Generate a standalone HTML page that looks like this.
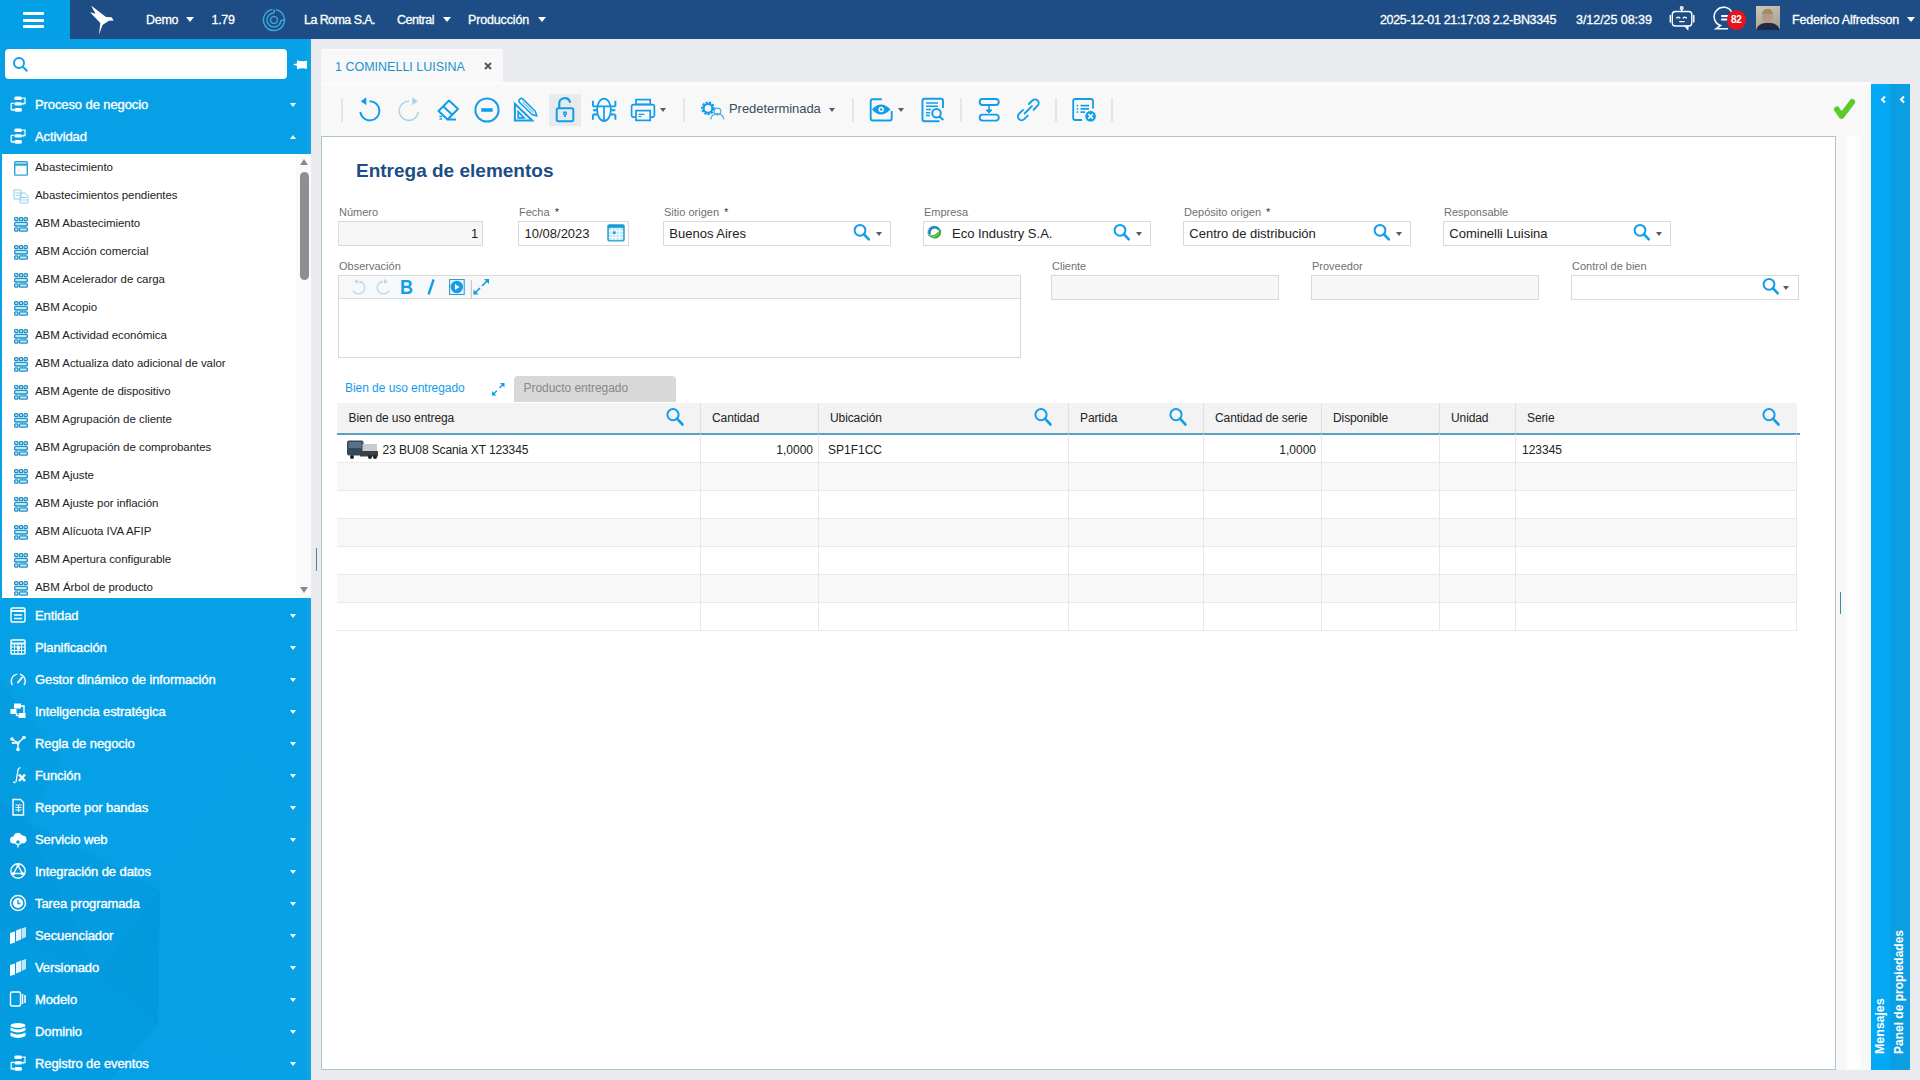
<!DOCTYPE html><html><head><meta charset="utf-8"><style>
*{box-sizing:border-box;margin:0;padding:0}
html,body{width:1920px;height:1080px;overflow:hidden;background:#e9ebef;font-family:"Liberation Sans",sans-serif;color:#222}
.a{position:absolute}
.t{position:absolute;white-space:nowrap}
svg{position:absolute;overflow:visible}
.caret{position:absolute;width:0;height:0;border-left:4px solid transparent;border-right:4px solid transparent;border-top:5px solid #fff}
.dcaret{position:absolute;width:0;height:0;border-left:3.5px solid transparent;border-right:3.5px solid transparent;border-top:4px solid #555c63}
</style></head><body>
<div class="a" style="left:0;top:0;width:1920px;height:39px;background:#1d4d84"></div>
<div class="a" style="left:0;top:0;width:70px;height:39px;background:#03a0e6"></div>
<div class="a" style="left:23px;top:12px;width:21px;height:3px;border-radius:1px;background:#fff"></div>
<div class="a" style="left:23px;top:18.5px;width:21px;height:3px;border-radius:1px;background:#fff"></div>
<div class="a" style="left:23px;top:25px;width:21px;height:3px;border-radius:1px;background:#fff"></div>
<svg style="left:80px;top:0" width="40" height="40" viewBox="0 0 40 40"><path d="M11 5.5 L26 17 L31.5 17.3 L33.8 20.6 L29 20.8 L22.5 25 L19 34.8 L20.3 23 L10 12.2 L15.5 13.7 Z" fill="#fff"/></svg>
<div class="t" style="left:146px;top:11.97px;font-size:12.5px;line-height:16px;color:#fff;-webkit-text-stroke:0.3px #fff;letter-spacing:-0.3px">Demo</div>
<div class="caret" style="left:186px;top:17px"></div>
<div class="t" style="left:211.5px;top:11.97px;font-size:12.5px;line-height:16px;color:#fff;-webkit-text-stroke:0.3px #fff;letter-spacing:-0.3px">1.79</div>
<svg style="left:262px;top:8px" width="24" height="24" viewBox="0 0 24 24" fill="none" stroke="#3aa4dd" stroke-width="1.5"><path d="M14 1.7A10.5 10.5 0 1 1 10.5 1.6"/><path d="M19 12A7 7 0 1 1 12 5"/><circle cx="12" cy="12" r="3.5"/><path d="M12.3 1.5v3.6M19 12.3h3.5"/></svg>
<div class="t" style="left:304px;top:11.97px;font-size:12.5px;line-height:16px;color:#fff;-webkit-text-stroke:0.3px #fff;letter-spacing:-0.57px">La Roma S.A.</div>
<div class="t" style="left:397px;top:11.97px;font-size:12.5px;line-height:16px;color:#fff;-webkit-text-stroke:0.3px #fff;letter-spacing:-0.47px">Central</div>
<div class="caret" style="left:443px;top:17px"></div>
<div class="t" style="left:468px;top:11.97px;font-size:12.5px;line-height:16px;color:#fff;-webkit-text-stroke:0.3px #fff;letter-spacing:-0.15px">Producción</div>
<div class="caret" style="left:538px;top:17px"></div>
<div class="t" style="left:1380px;top:12.27px;font-size:12.5px;line-height:16px;color:#fff;-webkit-text-stroke:0.3px #fff;letter-spacing:-0.34px">2025-12-01 21:17:03 2.2-BN3345</div>
<div class="t" style="left:1576px;top:12.27px;font-size:12.5px;line-height:16px;color:#fff;-webkit-text-stroke:0.3px #fff;letter-spacing:-0.05px">3/12/25 08:39</div>
<svg style="left:1660px;top:0" width="40" height="40" viewBox="0 0 40 40" fill="none" stroke="#fff" stroke-width="1.4" stroke-linecap="round"><rect x="12.3" y="11.5" width="19.5" height="14.5" rx="3"/><path d="M21.7 11.5V9.3"/><circle cx="21.7" cy="8" r="1.3"/><path d="M10.3 15.5v6.5M33.8 15.5v6.5"/><path d="M16.8 18q1.5-1.8 3 0M23.3 18q1.5-1.8 3 0M19.7 21.6h4.5"/><path d="M25 26l2.7 3l0.3-3"/></svg>
<svg style="left:1660px;top:0" width="80" height="40" viewBox="0 0 80 40" fill="none" stroke="#fff" stroke-width="1.5" stroke-linecap="round"><path d="M72 12.5A9.4 9.4 0 1 0 60.5 25.5L56 28.8h11.5"/><path d="M62 15.9h6M62 19.6h6" stroke-width="2"/></svg>
<div class="a" style="left:1726.5px;top:10px;width:19.5px;height:19.5px;border-radius:50%;background:#e8141c"></div>
<div class="t" style="left:1726.5px;top:12.5px;width:19.5px;text-align:center;font-size:10px;line-height:14px;font-weight:700;color:#fff;letter-spacing:-0.3px">82</div>
<div class="a" style="left:1756px;top:6px;width:24px;height:24px;background:linear-gradient(160deg,#cfc8b4,#9d9a90);overflow:hidden"><div class="a" style="left:6px;top:4px;width:11px;height:13px;border-radius:50%;background:#b89a82"></div><div class="a" style="left:6px;top:3px;width:11px;height:5px;border-radius:5px 5px 0 0;background:#a08a6a"></div><div class="a" style="left:0px;top:17px;width:24px;height:10px;border-radius:9px 9px 0 0;background:#1f2a44"></div></div>
<div class="t" style="left:1792px;top:11.97px;font-size:12.5px;line-height:16px;color:#fff;-webkit-text-stroke:0.3px #fff;letter-spacing:-0.18px">Federico Alfredsson</div>
<div class="caret" style="left:1907px;top:17px"></div>
<div class="a" style="left:0;top:39px;width:311px;height:1041px;background:#05a0e6;overflow:hidden"></div>
<svg style="left:0;top:0" width="311" height="1080" viewBox="0 0 311 1080"><path d="M0 800L28 822L97 974L0 930Z" fill="#003a6e" opacity="0.06"/><path d="M28 822L160 890L97 974Z" fill="#003a6e" opacity="0.04"/><path d="M97 974L160 890L158 1025Z" fill="#003a6e" opacity="0.07"/><path d="M0 930L97 974L158 1025L110 1080L0 1080Z" fill="#003a6e" opacity="0.045"/><path d="M160 890L250 760L311 820L311 1080L158 1025Z" fill="#ffffff" opacity="0.015"/><path d="M0 680L60 760L28 822L0 800Z" fill="#003a6e" opacity="0.03"/></svg>
<div class="a" style="left:306px;top:39px;width:5px;height:1041px;background:rgba(255,255,255,0.035)"></div>
<div class="a" style="left:5px;top:49px;width:282px;height:30px;background:#fff;border-radius:4px"></div>
<svg style="left:12px;top:56px" width="17" height="17" viewBox="0 0 17 17" fill="none" stroke="#129dea" stroke-width="2"><circle cx="7" cy="7" r="5"/><path d="M10.8 10.8l4.5 4.5"/></svg>
<svg style="left:0;top:0" width="1" height="1"><path d="M293 64.6L297 63.2V60.2Q302 62 307 60.8V68.8Q302 67.6 297 69.2V66Z" fill="#fff"/></svg>
<svg style="left:4px;top:94px" width="30" height="20" viewBox="0 0 30 20" fill="#fff"><rect x="10.3" y="2.4" width="7.7" height="3.6" rx="1.6"/><rect x="10.3" y="8.2" width="7.7" height="3.4" rx="1.6"/><rect x="10.3" y="14" width="7.7" height="3.7" rx="1.6"/><path d="M18.5 4.2h2.5v5.5h-1.8" fill="none" stroke="#fff" stroke-width="1.2"/><path d="M10 9.4H7.2v6.5h2" fill="none" stroke="#fff" stroke-width="1.2"/><path d="M19.5 8l-1.8 1.7l1.8 1.7z"/><path d="M8.8 14.2l1.8 1.7l-1.8 1.7z"/></svg>
<div class="t" style="left:35px;top:97.00px;font-size:13px;line-height:16px;color:#fff;-webkit-text-stroke:0.35px #fff;letter-spacing:-0.1px">Proceso de negocio</div>
<div class="caret" style="left:290px;top:102.8px;border-left-width:3.7px;border-right-width:3.7px;border-top-width:4.3px"></div>
<svg style="left:4px;top:126px" width="30" height="20" viewBox="0 0 30 20" fill="#fff"><rect x="10.3" y="2.4" width="7.7" height="3.6" rx="1.6"/><rect x="10.3" y="8.2" width="7.7" height="3.4" rx="1.6"/><rect x="10.3" y="14" width="7.7" height="3.7" rx="1.6"/><path d="M18.5 4.2h2.5v5.5h-1.8" fill="none" stroke="#fff" stroke-width="1.2"/><path d="M10 9.4H7.2v6.5h2" fill="none" stroke="#fff" stroke-width="1.2"/><path d="M19.5 8l-1.8 1.7l1.8 1.7z"/><path d="M8.8 14.2l1.8 1.7l-1.8 1.7z"/></svg>
<div class="t" style="left:35px;top:129.00px;font-size:13px;line-height:16px;color:#fff;-webkit-text-stroke:0.35px #fff;letter-spacing:-0.1px">Actividad</div>
<div class="caret" style="left:290px;top:134.5px;border-left-width:3.7px;border-right-width:3.7px;border-top:0;border-bottom:4.3px solid #fff"></div>
<div class="a" style="left:0;top:154px;width:311px;height:444px;background:#fff"></div>
<div class="a" style="left:0;top:154px;width:1.5px;height:444px;background:#0aa0e6"></div>
<div class="a" style="left:296px;top:154px;width:15px;height:444px;background:#fafafa"></div>
<svg style="left:14px;top:161px" width="14" height="15" viewBox="0 0 14 15" fill="none" stroke="#2aa3dc" stroke-width="1.4"><rect x="0.7" y="0.7" width="12.6" height="13.4" rx="0.8"/><path d="M0.7 3.6h12.6" stroke-width="2.2"/></svg>
<div class="t" style="left:35px;top:160.22px;font-size:11.5px;line-height:14px;color:#222;letter-spacing:-0.05px">Abastecimiento</div>
<svg style="left:13px;top:188px" width="16" height="16" viewBox="0 0 16 16" fill="none" stroke="#8fcbe9" stroke-width="1"><path d="M1 2h7v9H1z"/><path d="M7 5h5l3 3v7H7z"/><path d="M2.5 5h4M2.5 7.5h3M8.5 9.5h5M8.5 12h5"/></svg>
<div class="t" style="left:35px;top:188.22px;font-size:11.5px;line-height:14px;color:#222;letter-spacing:-0.05px">Abastecimientos pendientes</div>
<svg style="left:14px;top:217px" width="14" height="15" viewBox="0 0 14 15" stroke="#2590c6" stroke-width="1.3" fill="#b4ecfb"><rect x="0.65" y="0.65" width="3.3" height="2.9" rx="0.9"/><rect x="5.35" y="0.65" width="3.3" height="2.9" rx="0.9"/><rect x="10.05" y="0.65" width="3.3" height="2.9" rx="0.9"/><rect x="0.65" y="5.4" width="12.7" height="3.6" rx="1"/><rect x="0.65" y="10.9" width="3.3" height="3.3" rx="0.9"/><rect x="5.35" y="10.9" width="8" height="3.3" rx="0.9"/></svg>
<div class="t" style="left:35px;top:216.22px;font-size:11.5px;line-height:14px;color:#222;letter-spacing:-0.05px">ABM Abastecimiento</div>
<svg style="left:14px;top:245px" width="14" height="15" viewBox="0 0 14 15" stroke="#2590c6" stroke-width="1.3" fill="#b4ecfb"><rect x="0.65" y="0.65" width="3.3" height="2.9" rx="0.9"/><rect x="5.35" y="0.65" width="3.3" height="2.9" rx="0.9"/><rect x="10.05" y="0.65" width="3.3" height="2.9" rx="0.9"/><rect x="0.65" y="5.4" width="12.7" height="3.6" rx="1"/><rect x="0.65" y="10.9" width="3.3" height="3.3" rx="0.9"/><rect x="5.35" y="10.9" width="8" height="3.3" rx="0.9"/></svg>
<div class="t" style="left:35px;top:244.22px;font-size:11.5px;line-height:14px;color:#222;letter-spacing:-0.05px">ABM Acción comercial</div>
<svg style="left:14px;top:273px" width="14" height="15" viewBox="0 0 14 15" stroke="#2590c6" stroke-width="1.3" fill="#b4ecfb"><rect x="0.65" y="0.65" width="3.3" height="2.9" rx="0.9"/><rect x="5.35" y="0.65" width="3.3" height="2.9" rx="0.9"/><rect x="10.05" y="0.65" width="3.3" height="2.9" rx="0.9"/><rect x="0.65" y="5.4" width="12.7" height="3.6" rx="1"/><rect x="0.65" y="10.9" width="3.3" height="3.3" rx="0.9"/><rect x="5.35" y="10.9" width="8" height="3.3" rx="0.9"/></svg>
<div class="t" style="left:35px;top:272.22px;font-size:11.5px;line-height:14px;color:#222;letter-spacing:-0.05px">ABM Acelerador de carga</div>
<svg style="left:14px;top:301px" width="14" height="15" viewBox="0 0 14 15" stroke="#2590c6" stroke-width="1.3" fill="#b4ecfb"><rect x="0.65" y="0.65" width="3.3" height="2.9" rx="0.9"/><rect x="5.35" y="0.65" width="3.3" height="2.9" rx="0.9"/><rect x="10.05" y="0.65" width="3.3" height="2.9" rx="0.9"/><rect x="0.65" y="5.4" width="12.7" height="3.6" rx="1"/><rect x="0.65" y="10.9" width="3.3" height="3.3" rx="0.9"/><rect x="5.35" y="10.9" width="8" height="3.3" rx="0.9"/></svg>
<div class="t" style="left:35px;top:300.22px;font-size:11.5px;line-height:14px;color:#222;letter-spacing:-0.05px">ABM Acopio</div>
<svg style="left:14px;top:329px" width="14" height="15" viewBox="0 0 14 15" stroke="#2590c6" stroke-width="1.3" fill="#b4ecfb"><rect x="0.65" y="0.65" width="3.3" height="2.9" rx="0.9"/><rect x="5.35" y="0.65" width="3.3" height="2.9" rx="0.9"/><rect x="10.05" y="0.65" width="3.3" height="2.9" rx="0.9"/><rect x="0.65" y="5.4" width="12.7" height="3.6" rx="1"/><rect x="0.65" y="10.9" width="3.3" height="3.3" rx="0.9"/><rect x="5.35" y="10.9" width="8" height="3.3" rx="0.9"/></svg>
<div class="t" style="left:35px;top:328.22px;font-size:11.5px;line-height:14px;color:#222;letter-spacing:-0.05px">ABM Actividad económica</div>
<svg style="left:14px;top:357px" width="14" height="15" viewBox="0 0 14 15" stroke="#2590c6" stroke-width="1.3" fill="#b4ecfb"><rect x="0.65" y="0.65" width="3.3" height="2.9" rx="0.9"/><rect x="5.35" y="0.65" width="3.3" height="2.9" rx="0.9"/><rect x="10.05" y="0.65" width="3.3" height="2.9" rx="0.9"/><rect x="0.65" y="5.4" width="12.7" height="3.6" rx="1"/><rect x="0.65" y="10.9" width="3.3" height="3.3" rx="0.9"/><rect x="5.35" y="10.9" width="8" height="3.3" rx="0.9"/></svg>
<div class="t" style="left:35px;top:356.22px;font-size:11.5px;line-height:14px;color:#222;letter-spacing:-0.05px">ABM Actualiza dato adicional de valor</div>
<svg style="left:14px;top:385px" width="14" height="15" viewBox="0 0 14 15" stroke="#2590c6" stroke-width="1.3" fill="#b4ecfb"><rect x="0.65" y="0.65" width="3.3" height="2.9" rx="0.9"/><rect x="5.35" y="0.65" width="3.3" height="2.9" rx="0.9"/><rect x="10.05" y="0.65" width="3.3" height="2.9" rx="0.9"/><rect x="0.65" y="5.4" width="12.7" height="3.6" rx="1"/><rect x="0.65" y="10.9" width="3.3" height="3.3" rx="0.9"/><rect x="5.35" y="10.9" width="8" height="3.3" rx="0.9"/></svg>
<div class="t" style="left:35px;top:384.22px;font-size:11.5px;line-height:14px;color:#222;letter-spacing:-0.05px">ABM Agente de dispositivo</div>
<svg style="left:14px;top:413px" width="14" height="15" viewBox="0 0 14 15" stroke="#2590c6" stroke-width="1.3" fill="#b4ecfb"><rect x="0.65" y="0.65" width="3.3" height="2.9" rx="0.9"/><rect x="5.35" y="0.65" width="3.3" height="2.9" rx="0.9"/><rect x="10.05" y="0.65" width="3.3" height="2.9" rx="0.9"/><rect x="0.65" y="5.4" width="12.7" height="3.6" rx="1"/><rect x="0.65" y="10.9" width="3.3" height="3.3" rx="0.9"/><rect x="5.35" y="10.9" width="8" height="3.3" rx="0.9"/></svg>
<div class="t" style="left:35px;top:412.22px;font-size:11.5px;line-height:14px;color:#222;letter-spacing:-0.05px">ABM Agrupación de cliente</div>
<svg style="left:14px;top:441px" width="14" height="15" viewBox="0 0 14 15" stroke="#2590c6" stroke-width="1.3" fill="#b4ecfb"><rect x="0.65" y="0.65" width="3.3" height="2.9" rx="0.9"/><rect x="5.35" y="0.65" width="3.3" height="2.9" rx="0.9"/><rect x="10.05" y="0.65" width="3.3" height="2.9" rx="0.9"/><rect x="0.65" y="5.4" width="12.7" height="3.6" rx="1"/><rect x="0.65" y="10.9" width="3.3" height="3.3" rx="0.9"/><rect x="5.35" y="10.9" width="8" height="3.3" rx="0.9"/></svg>
<div class="t" style="left:35px;top:440.22px;font-size:11.5px;line-height:14px;color:#222;letter-spacing:-0.05px">ABM Agrupación de comprobantes</div>
<svg style="left:14px;top:469px" width="14" height="15" viewBox="0 0 14 15" stroke="#2590c6" stroke-width="1.3" fill="#b4ecfb"><rect x="0.65" y="0.65" width="3.3" height="2.9" rx="0.9"/><rect x="5.35" y="0.65" width="3.3" height="2.9" rx="0.9"/><rect x="10.05" y="0.65" width="3.3" height="2.9" rx="0.9"/><rect x="0.65" y="5.4" width="12.7" height="3.6" rx="1"/><rect x="0.65" y="10.9" width="3.3" height="3.3" rx="0.9"/><rect x="5.35" y="10.9" width="8" height="3.3" rx="0.9"/></svg>
<div class="t" style="left:35px;top:468.22px;font-size:11.5px;line-height:14px;color:#222;letter-spacing:-0.05px">ABM Ajuste</div>
<svg style="left:14px;top:497px" width="14" height="15" viewBox="0 0 14 15" stroke="#2590c6" stroke-width="1.3" fill="#b4ecfb"><rect x="0.65" y="0.65" width="3.3" height="2.9" rx="0.9"/><rect x="5.35" y="0.65" width="3.3" height="2.9" rx="0.9"/><rect x="10.05" y="0.65" width="3.3" height="2.9" rx="0.9"/><rect x="0.65" y="5.4" width="12.7" height="3.6" rx="1"/><rect x="0.65" y="10.9" width="3.3" height="3.3" rx="0.9"/><rect x="5.35" y="10.9" width="8" height="3.3" rx="0.9"/></svg>
<div class="t" style="left:35px;top:496.22px;font-size:11.5px;line-height:14px;color:#222;letter-spacing:-0.05px">ABM Ajuste por inflación</div>
<svg style="left:14px;top:525px" width="14" height="15" viewBox="0 0 14 15" stroke="#2590c6" stroke-width="1.3" fill="#b4ecfb"><rect x="0.65" y="0.65" width="3.3" height="2.9" rx="0.9"/><rect x="5.35" y="0.65" width="3.3" height="2.9" rx="0.9"/><rect x="10.05" y="0.65" width="3.3" height="2.9" rx="0.9"/><rect x="0.65" y="5.4" width="12.7" height="3.6" rx="1"/><rect x="0.65" y="10.9" width="3.3" height="3.3" rx="0.9"/><rect x="5.35" y="10.9" width="8" height="3.3" rx="0.9"/></svg>
<div class="t" style="left:35px;top:524.22px;font-size:11.5px;line-height:14px;color:#222;letter-spacing:-0.05px">ABM Alícuota IVA AFIP</div>
<svg style="left:14px;top:553px" width="14" height="15" viewBox="0 0 14 15" stroke="#2590c6" stroke-width="1.3" fill="#b4ecfb"><rect x="0.65" y="0.65" width="3.3" height="2.9" rx="0.9"/><rect x="5.35" y="0.65" width="3.3" height="2.9" rx="0.9"/><rect x="10.05" y="0.65" width="3.3" height="2.9" rx="0.9"/><rect x="0.65" y="5.4" width="12.7" height="3.6" rx="1"/><rect x="0.65" y="10.9" width="3.3" height="3.3" rx="0.9"/><rect x="5.35" y="10.9" width="8" height="3.3" rx="0.9"/></svg>
<div class="t" style="left:35px;top:552.22px;font-size:11.5px;line-height:14px;color:#222;letter-spacing:-0.05px">ABM Apertura configurable</div>
<svg style="left:14px;top:581px" width="14" height="15" viewBox="0 0 14 15" stroke="#2590c6" stroke-width="1.3" fill="#b4ecfb"><rect x="0.65" y="0.65" width="3.3" height="2.9" rx="0.9"/><rect x="5.35" y="0.65" width="3.3" height="2.9" rx="0.9"/><rect x="10.05" y="0.65" width="3.3" height="2.9" rx="0.9"/><rect x="0.65" y="5.4" width="12.7" height="3.6" rx="1"/><rect x="0.65" y="10.9" width="3.3" height="3.3" rx="0.9"/><rect x="5.35" y="10.9" width="8" height="3.3" rx="0.9"/></svg>
<div class="t" style="left:35px;top:580.22px;font-size:11.5px;line-height:14px;color:#222;letter-spacing:-0.05px">ABM Árbol de producto</div>
<div class="a" style="left:300px;top:159px;width:0;height:0;border-left:4.5px solid transparent;border-right:4.5px solid transparent;border-bottom:6px solid #8a8a8a"></div>
<div class="a" style="left:300px;top:172px;width:9px;height:108px;border-radius:5px;background:#8f8f8f"></div>
<div class="a" style="left:300px;top:587px;width:0;height:0;border-left:4.5px solid transparent;border-right:4.5px solid transparent;border-top:6px solid #8a8a8a"></div>
<svg style="left:9px;top:606px" width="18" height="18" viewBox="0 0 18 18"><rect x="2" y="2" width="14" height="14" rx="1.5" fill="none" stroke="#fff" stroke-width="1.4"/><path d="M2 5h14" stroke="#fff" stroke-width="2"/><path d="M5 9h8M5 12.5h8" stroke="#fff" stroke-width="1.6"/></svg>
<div class="t" style="left:35px;top:608.00px;font-size:13px;line-height:16px;color:#fff;-webkit-text-stroke:0.35px #fff;letter-spacing:-0.1px">Entidad</div>
<div class="caret" style="left:290px;top:613.8px;border-left-width:3.7px;border-right-width:3.7px;border-top-width:4.3px"></div>
<svg style="left:9px;top:638px" width="18" height="18" viewBox="0 0 18 18"><rect x="2" y="2" width="14" height="14" rx="1" fill="none" stroke="#fff" stroke-width="1.4"/><path d="M2 5.5h14" stroke="#fff" stroke-width="2"/><path d="M2 9h14M2 12.5h14M5.5 5.5v10.5M9 5.5v10.5M12.5 5.5v10.5" stroke="#fff" stroke-width="1"/><rect x="8" y="8.5" width="3" height="3" fill="#fff"/></svg>
<div class="t" style="left:35px;top:640.00px;font-size:13px;line-height:16px;color:#fff;-webkit-text-stroke:0.35px #fff;letter-spacing:-0.1px">Planificación</div>
<div class="caret" style="left:290px;top:645.8px;border-left-width:3.7px;border-right-width:3.7px;border-top-width:4.3px"></div>
<svg style="left:9px;top:670px" width="18" height="18" viewBox="0 0 18 18"><path d="M3.5 15A7 7 0 1 1 15 15" fill="none" stroke="#fff" stroke-width="1.4" stroke-dasharray="14 2.5"/><path d="M9 12.5l4-5" stroke="#fff" stroke-width="2" stroke-linecap="round"/></svg>
<div class="t" style="left:35px;top:672.00px;font-size:13px;line-height:16px;color:#fff;-webkit-text-stroke:0.35px #fff;letter-spacing:-0.1px">Gestor dinámico de información</div>
<div class="caret" style="left:290px;top:677.8px;border-left-width:3.7px;border-right-width:3.7px;border-top-width:4.3px"></div>
<svg style="left:9px;top:702px" width="18" height="18" viewBox="0 0 18 18"><rect x="5" y="1.5" width="7" height="5" fill="#fff"/><rect x="1.5" y="7" width="6" height="5" fill="#fff"/><rect x="9.5" y="11" width="7" height="5" fill="#fff"/><path d="M12 4h3v7M7.5 11v2.5h2" fill="none" stroke="#fff" stroke-width="1.4"/></svg>
<div class="t" style="left:35px;top:704.00px;font-size:13px;line-height:16px;color:#fff;-webkit-text-stroke:0.35px #fff;letter-spacing:-0.1px">Inteligencia estratégica</div>
<div class="caret" style="left:290px;top:709.8px;border-left-width:3.7px;border-right-width:3.7px;border-top-width:4.3px"></div>
<svg style="left:9px;top:734px" width="18" height="18" viewBox="0 0 18 18"><circle cx="9" cy="9" r="1.8" fill="#fff"/><circle cx="3" cy="5" r="1.8" fill="#fff"/><circle cx="15" cy="3.5" r="1.8" fill="#fff"/><circle cx="9" cy="15.5" r="1.8" fill="#fff"/><circle cx="4" cy="9" r="1.2" fill="#fff"/><path d="M3 5L9 9L15 3.5M9 9v6.5M4 9h5" fill="none" stroke="#fff" stroke-width="1.4"/></svg>
<div class="t" style="left:35px;top:736.00px;font-size:13px;line-height:16px;color:#fff;-webkit-text-stroke:0.35px #fff;letter-spacing:-0.1px">Regla de negocio</div>
<div class="caret" style="left:290px;top:741.8px;border-left-width:3.7px;border-right-width:3.7px;border-top-width:4.3px"></div>
<svg style="left:9px;top:766px" width="18" height="18" viewBox="0 0 18 18"><path d="M6.5 16.5q-1.5 0.5-2-1M7 16l2-12q0.5-2.5 2.5-2" fill="none" stroke="#fff" stroke-width="1.3"/><path d="M10 8.5l6 6.5M16 8.5l-6 6.5" stroke="#fff" stroke-width="2.5"/></svg>
<div class="t" style="left:35px;top:768.00px;font-size:13px;line-height:16px;color:#fff;-webkit-text-stroke:0.35px #fff;letter-spacing:-0.1px">Función</div>
<div class="caret" style="left:290px;top:773.8px;border-left-width:3.7px;border-right-width:3.7px;border-top-width:4.3px"></div>
<svg style="left:9px;top:798px" width="18" height="18" viewBox="0 0 18 18"><path d="M4 1.5h7.5l3 3v12.5H4z" fill="none" stroke="#fff" stroke-width="1.4"/><path d="M6.5 7h6M6.5 9.5h6M6.5 12h6M9.5 7v7" stroke="#fff" stroke-width="1"/></svg>
<div class="t" style="left:35px;top:800.00px;font-size:13px;line-height:16px;color:#fff;-webkit-text-stroke:0.35px #fff;letter-spacing:-0.1px">Reporte por bandas</div>
<div class="caret" style="left:290px;top:805.8px;border-left-width:3.7px;border-right-width:3.7px;border-top-width:4.3px"></div>
<svg style="left:9px;top:830px" width="18" height="18" viewBox="0 0 18 18"><path d="M4.5 13.5a3.5 3.5 0 0 1 0-7a4.5 4.5 0 0 1 8.5-1a3.5 3.5 0 0 1 1 8z" fill="#fff"/><circle cx="9" cy="12" r="2.5" fill="#09a0e6" stroke="#fff" stroke-width="1.3"/><path d="M9 14.5v3" stroke="#fff" stroke-width="1.3"/></svg>
<div class="t" style="left:35px;top:832.00px;font-size:13px;line-height:16px;color:#fff;-webkit-text-stroke:0.35px #fff;letter-spacing:-0.1px">Servicio web</div>
<div class="caret" style="left:290px;top:837.8px;border-left-width:3.7px;border-right-width:3.7px;border-top-width:4.3px"></div>
<svg style="left:9px;top:862px" width="18" height="18" viewBox="0 0 18 18"><circle cx="9" cy="9" r="7.2" fill="none" stroke="#fff" stroke-width="1.4"/><path d="M9 3.5l4.5 8h-9z" fill="none" stroke="#fff" stroke-width="1.4"/><circle cx="9" cy="3.5" r="1.5" fill="#fff"/><circle cx="13.5" cy="11.5" r="1.5" fill="#fff"/><circle cx="4.5" cy="11.5" r="1.5" fill="#fff"/></svg>
<div class="t" style="left:35px;top:864.00px;font-size:13px;line-height:16px;color:#fff;-webkit-text-stroke:0.35px #fff;letter-spacing:-0.1px">Integración de datos</div>
<div class="caret" style="left:290px;top:869.8px;border-left-width:3.7px;border-right-width:3.7px;border-top-width:4.3px"></div>
<svg style="left:9px;top:894px" width="18" height="18" viewBox="0 0 18 18"><circle cx="9" cy="9" r="7.5" fill="none" stroke="#fff" stroke-width="1.4"/><circle cx="9" cy="9" r="5" fill="#fff"/><path d="M9 6v3.5h2.5" stroke="#09a0e6" stroke-width="1.4" fill="none"/></svg>
<div class="t" style="left:35px;top:896.00px;font-size:13px;line-height:16px;color:#fff;-webkit-text-stroke:0.35px #fff;letter-spacing:-0.1px">Tarea programada</div>
<div class="caret" style="left:290px;top:901.8px;border-left-width:3.7px;border-right-width:3.7px;border-top-width:4.3px"></div>
<svg style="left:9px;top:926px" width="18" height="18" viewBox="0 0 18 18"><path d="M1 7l5-1.5v11L1 18z" fill="#fff"/><path d="M7 4.5l5-2v11l-5 2z" fill="#fff" opacity="0.9"/><path d="M12.5 2.5l4.5-1.5v10l-4.5 2z" fill="#fff" opacity="0.75"/></svg>
<div class="t" style="left:35px;top:928.00px;font-size:13px;line-height:16px;color:#fff;-webkit-text-stroke:0.35px #fff;letter-spacing:-0.1px">Secuenciador</div>
<div class="caret" style="left:290px;top:933.8px;border-left-width:3.7px;border-right-width:3.7px;border-top-width:4.3px"></div>
<svg style="left:9px;top:958px" width="18" height="18" viewBox="0 0 18 18"><path d="M1 7l5-1.5v11L1 18z" fill="#fff"/><path d="M7 4.5l5-2v11l-5 2z" fill="#fff" opacity="0.9"/><path d="M12.5 2.5l4.5-1.5v10l-4.5 2z" fill="#fff" opacity="0.75"/></svg>
<div class="t" style="left:35px;top:960.00px;font-size:13px;line-height:16px;color:#fff;-webkit-text-stroke:0.35px #fff;letter-spacing:-0.1px">Versionado</div>
<div class="caret" style="left:290px;top:965.8px;border-left-width:3.7px;border-right-width:3.7px;border-top-width:4.3px"></div>
<svg style="left:9px;top:990px" width="18" height="18" viewBox="0 0 18 18"><rect x="1.5" y="2" width="10" height="14" rx="1.5" fill="none" stroke="#fff" stroke-width="1.4"/><path d="M13.5 4v10M16 5v8" stroke="#fff" stroke-width="1.5"/></svg>
<div class="t" style="left:35px;top:992.00px;font-size:13px;line-height:16px;color:#fff;-webkit-text-stroke:0.35px #fff;letter-spacing:-0.1px">Modelo</div>
<div class="caret" style="left:290px;top:997.8px;border-left-width:3.7px;border-right-width:3.7px;border-top-width:4.3px"></div>
<svg style="left:9px;top:1022px" width="18" height="18" viewBox="0 0 18 18"><ellipse cx="9" cy="3.5" rx="7.5" ry="2.5" fill="#fff"/><path d="M1.5 5.5q7.5 4 15 0v3q-7.5 4-15 0z" fill="#fff"/><path d="M1.5 10.5q7.5 4 15 0v3.5q-7.5 4-15 0z" fill="#fff"/></svg>
<div class="t" style="left:35px;top:1024.00px;font-size:13px;line-height:16px;color:#fff;-webkit-text-stroke:0.35px #fff;letter-spacing:-0.1px">Dominio</div>
<div class="caret" style="left:290px;top:1029.8px;border-left-width:3.7px;border-right-width:3.7px;border-top-width:4.3px"></div>
<svg style="left:4px;top:1053px" width="30" height="20" viewBox="0 0 30 20" fill="#fff"><rect x="10.3" y="2.4" width="7.7" height="3.6" rx="1.6"/><rect x="10.3" y="8.2" width="7.7" height="3.4" rx="1.6"/><rect x="10.3" y="14" width="7.7" height="3.7" rx="1.6"/><path d="M18.5 4.2h2.5v5.5h-1.8" fill="none" stroke="#fff" stroke-width="1.2"/><path d="M10 9.4H7.2v6.5h2" fill="none" stroke="#fff" stroke-width="1.2"/><path d="M19.5 8l-1.8 1.7l1.8 1.7z"/><path d="M8.8 14.2l1.8 1.7l-1.8 1.7z"/></svg>
<div class="t" style="left:35px;top:1056.00px;font-size:13px;line-height:16px;color:#fff;-webkit-text-stroke:0.35px #fff;letter-spacing:-0.1px">Registro de eventos</div>
<div class="caret" style="left:290px;top:1061.8px;border-left-width:3.7px;border-right-width:3.7px;border-top-width:4.3px"></div>
<div class="a" style="left:321px;top:49px;width:182px;height:34px;background:#f8f8f9;border-radius:3px 3px 0 0;border-top:2px solid #fcfcfc"></div>
<div class="t" style="left:335px;top:59.27px;font-size:12.5px;line-height:16px;color:#1b93cc">1 COMINELLI LUISINA</div>
<svg style="left:484px;top:62px" width="8" height="8" viewBox="0 0 8 8"><path d="M1 1l6 6M7 1l-6 6" stroke="#4d5a61" stroke-width="2"/></svg>
<div class="a" style="left:321px;top:82px;width:1550px;height:988px;background:#f8f8f9;border-top:3px solid #fbfcfc"></div>
<div class="a" style="left:341px;top:98px;width:1.5px;height:24px;background:#e4e6e8"></div>
<div class="a" style="left:683px;top:98px;width:1.5px;height:24px;background:#e4e6e8"></div>
<div class="a" style="left:852px;top:98px;width:1.5px;height:24px;background:#e4e6e8"></div>
<div class="a" style="left:960px;top:98px;width:1.5px;height:24px;background:#e4e6e8"></div>
<div class="a" style="left:1055px;top:98px;width:1.5px;height:24px;background:#e4e6e8"></div>
<div class="a" style="left:1111px;top:98px;width:1.5px;height:24px;background:#e4e6e8"></div>
<svg style="left:0;top:0" width="1" height="1"><path d="M360.3 112A9.6 9.6 0 1 0 369.6 101.2" fill="none" stroke="#129dea" stroke-width="2"/><path d="M360.8 101.2l5.5-4v8z" fill="#129dea"/></svg>
<svg style="left:0;top:0" width="1" height="1"><path d="M418.3 112A9.6 9.6 0 1 1 409 101.2" fill="none" stroke="#a9d3ea" stroke-width="1.6"/><path d="M417.8 101.2l-5.5-4v8z" fill="#a9d3ea"/></svg>
<svg style="left:0;top:0" width="1" height="1"><path d="M438.5 111L449 100.5L458 109L447.5 119.5Z" fill="none" stroke="#129dea" stroke-width="2" stroke-linejoin="round"/><path d="M443.5 106.5l9 8.5M447.5 119.5h8.5" fill="none" stroke="#129dea" stroke-width="2"/><path d="M439.5 116.5h2.5M439.5 119h2.5" stroke="#129dea" stroke-width="1.5"/></svg>
<svg style="left:0;top:0" width="1" height="1"><circle cx="487" cy="110" r="11.6" fill="none" stroke="#129dea" stroke-width="2"/><rect x="481.2" y="108.2" width="11.5" height="3.6" fill="#129dea"/></svg>
<svg style="left:0;top:0" width="1" height="1"><path d="M514.9 103.8V120.6H532.2Z" fill="none" stroke="#129dea" stroke-width="2" stroke-width="1.9" stroke-linejoin="miter"/><path d="M518.2 111.6V117.8H524Z" fill="none" stroke="#129dea" stroke-width="1.7"/><g transform="translate(521.3 100.8) rotate(44.5)"><path d="M0 -2.3H17.3L21.8 0L17.3 2.3H0A2.3 2.3 0 0 1 0 -2.3Z" fill="none" stroke="#129dea" stroke-width="1.5" stroke-linejoin="round"/><path d="M1.5 0H17" stroke="#129dea" stroke-width="0.9"/></g></svg>
<div class="a" style="left:549px;top:94px;width:32px;height:32px;background:#e8ebee"></div>
<svg style="left:0;top:0" width="1" height="1"><rect x="556.7" y="108.2" width="16.6" height="13" rx="1.6" fill="none" stroke="#129dea" stroke-width="2"/><path d="M559.2 108V103.6A5.5 5.5 0 0 1 569.9 101.9" fill="none" stroke="#129dea" stroke-width="2.2" stroke-linecap="round"/><circle cx="565" cy="113.3" r="1.4" fill="none" stroke="#129dea" stroke-width="1.5"/><rect x="564.2" y="114.4" width="1.7" height="2.6" fill="#129dea"/></svg>
<svg style="left:0;top:0" width="1" height="1"><ellipse cx="604" cy="109.8" rx="6.9" ry="11.2" fill="none" stroke="#129dea" stroke-width="1.8"/><path d="M592.9 106.4H615.4M604 106.4V121" stroke="#129dea" stroke-width="1.7"/><path d="M592.9 100.8V106.4M592.9 114.5V119.8M615.4 100.8V106.4M615.4 114.5V119.8M592.9 110.2H597.5M592.9 114.5H597.5M610.7 110.2H615.4M610.7 114.5H615.4" stroke="#129dea" stroke-width="1.9"/></svg>
<svg style="left:0;top:0" width="1" height="1"><rect x="636" y="99.6" width="14.2" height="4.8" fill="none" stroke="#129dea" stroke-width="1.7"/><path d="M635.4 117.2H633.2Q631.6 117.2 631.6 115.6V106.6Q631.6 104.6 633.6 104.6H652.4Q654.4 104.6 654.4 106.6V115.6Q654.4 117.2 652.8 117.2H650.6" fill="none" stroke="#129dea" stroke-width="1.7"/><rect x="636" y="110.6" width="14.2" height="9.8" fill="#f8f8f9" stroke="#129dea" stroke-width="1.7"/><path d="M638.6 114.4h5.8M638.6 116.5h3" stroke="#129dea" stroke-width="1.2"/></svg>
<div class="dcaret" style="left:660px;top:108px;border-left-width:3.5px;border-right-width:3.5px;border-top-width:4px"></div>
<svg style="left:0;top:0" width="1" height="1"><circle cx="708" cy="108.3" r="5.3" fill="none" stroke="#129dea" stroke-width="3.2" stroke-dasharray="2.1 1.05"/><circle cx="708" cy="108.3" r="4.4" fill="none" stroke="#129dea" stroke-width="2"/><circle cx="717.5" cy="111.5" r="3.3" fill="#f8f8f9" stroke="#4ab0e2" stroke-width="1.2"/><path d="M710.8 119.5a6.5 6 0 0 1 13 0" fill="none" stroke="#4ab0e2" stroke-width="1.2"/></svg>
<div class="t" style="left:729px;top:100.70px;font-size:13px;line-height:16px;color:#3b4d5b;letter-spacing:-0.05px">Predeterminada</div>
<div class="dcaret" style="left:829px;top:108px;border-left-width:3.7px;border-right-width:3.7px;border-top-width:4.3px"></div>
<svg style="left:0;top:0" width="1" height="1"><path d="M881.8 99.3H872.7Q870.7 99.3 870.7 101.3V118.5Q870.7 120.5 872.7 120.5H889.7Q891.7 120.5 891.7 118.5V111" fill="none" stroke="#129dea" stroke-width="1.9"/><path d="M872 109.5q8.8-10 18.5 0q-9.7 10-18.5 0z" fill="#129dea"/><circle cx="881.2" cy="109.5" r="2.7" fill="#fff"/><circle cx="881.2" cy="109.5" r="1.3" fill="#129dea"/></svg>
<div class="dcaret" style="left:898px;top:108px;border-left-width:3.7px;border-right-width:3.7px;border-top-width:4.3px"></div>
<svg style="left:0;top:0" width="1" height="1"><path d="M939.5 121.2H924.5Q922.5 121.2 922.5 119.2V100.8Q922.5 98.8 924.5 98.8H941Q943 98.8 943 100.8V108" fill="none" stroke="#129dea" stroke-width="1.9"/><path d="M926 103h12M926 106.3h12M926 109.5h5M926 112.8h4M926 115.5h4" stroke="#129dea" stroke-width="1.6"/><circle cx="936.5" cy="113.2" r="4.3" fill="none" stroke="#129dea" stroke-width="2"/><path d="M939.5 116.5l3.8 3.5" stroke="#129dea" stroke-width="2.2"/></svg>
<svg style="left:0;top:0" width="1" height="1"><rect x="979.6" y="99" width="19.2" height="6" rx="3" fill="none" stroke="#129dea" stroke-width="1.8"/><rect x="979.6" y="114.6" width="19.2" height="6" rx="3" fill="none" stroke="#129dea" stroke-width="1.8"/><path d="M989 105v6" stroke="#129dea" stroke-width="1.6"/><path d="M986 110l3 3l3-3z" fill="#129dea" stroke="#129dea" stroke-width="1"/></svg>
<svg style="left:0;top:0" width="1" height="1"><g transform="translate(1028.3 109.8) rotate(-45)" fill="none" stroke="#129dea" stroke-width="1.9" stroke-linecap="round"><path d="M-3.8 -3.7H-9.5A3.7 3.7 0 0 0 -9.5 3.7H-4.5"/><path d="M3.8 3.7H9.5A3.7 3.7 0 0 0 9.5 -3.7H4.5"/><path d="M-5.2 0H5.2"/></g></svg>
<svg style="left:0;top:0" width="1" height="1"><path d="M1082 120H1075.2Q1073.2 120 1073.2 118V101Q1073.2 99 1075.2 99H1091Q1093 99 1093 101V108.5" fill="none" stroke="#129dea" stroke-width="1.8"/><circle cx="1077.4" cy="105.6" r="0.9" fill="#129dea"/><circle cx="1077.4" cy="108.9" r="0.9" fill="#129dea"/><circle cx="1077.4" cy="112.1" r="0.9" fill="#129dea"/><path d="M1080.5 105.6h8.5M1080.5 108.9h8.5M1080.5 112.1h4.5" stroke="#129dea" stroke-width="1.8"/><circle cx="1090.6" cy="116.3" r="5.8" fill="#129dea" stroke="#f8f8f9" stroke-width="1"/><path d="M1088.3 114l4.6 4.6M1092.9 114l-4.6 4.6" stroke="#fff" stroke-width="1.6"/></svg>
<svg style="left:0;top:0" width="1" height="1"><path d="M1836.9 109.4L1841.6 116L1852.2 101.9" fill="none" stroke="#5dca2c" stroke-width="5.8" stroke-linecap="round" stroke-linejoin="round"/></svg>
<div class="a" style="left:321px;top:136px;width:1515px;height:934px;background:#fff;border:1px solid #adc4cd"></div>
<div class="a" style="left:1846px;top:136px;width:15px;height:933px;background:#fdfdfd"></div>
<div class="a" style="left:1871px;top:84px;width:19px;height:986px;background:#03a9f4"></div>
<div class="a" style="left:1890px;top:84px;width:20px;height:986px;background:#0b9ee2"></div>
<svg style="left:0;top:0" width="1" height="1"><path d="M1885 96.5l-3 3l3 3M1904 96.5l-3 3l3 3" fill="none" stroke="#fff" stroke-width="2"/></svg>
<div class="t" style="left:1873px;top:1054px;transform:rotate(-90deg);transform-origin:0 0;font-size:12.5px;line-height:15px;color:#fff;font-weight:700;letter-spacing:-0.1px">Mensajes</div>
<div class="t" style="left:1892px;top:1054px;transform:rotate(-90deg);transform-origin:0 0;font-size:12px;line-height:15px;color:#fff;font-weight:700">Panel de propiedades</div>
<div class="a" style="left:316px;top:548px;width:1px;height:23px;background:#3f8aa8"></div>
<div class="a" style="left:1840px;top:592px;width:1px;height:22px;background:#3f8aa8"></div>
<div class="t" style="left:356px;top:158.92px;font-size:19px;line-height:24px;font-weight:700;color:#1d4d84">Entrega de elementos</div>
<div class="t" style="left:339px;top:205.49px;font-size:11px;line-height:14px;color:#707070;">Número</div>
<div class="t" style="left:519px;top:205.49px;font-size:11px;line-height:14px;color:#707070;">Fecha <span style="color:#333;margin-left:2px">*</span></div>
<div class="t" style="left:664px;top:205.49px;font-size:11px;line-height:14px;color:#707070;">Sitio origen <span style="color:#333;margin-left:2px">*</span></div>
<div class="t" style="left:924px;top:205.49px;font-size:11px;line-height:14px;color:#707070;">Empresa</div>
<div class="t" style="left:1184px;top:205.49px;font-size:11px;line-height:14px;color:#707070;">Depósito origen <span style="color:#333;margin-left:2px">*</span></div>
<div class="t" style="left:1444px;top:205.49px;font-size:11px;line-height:14px;color:#707070;">Responsable</div>
<div class="a" style="left:338px;top:221px;width:145px;height:25px;border:1px solid #d9d9d9;background:#f7f7f7"></div>
<div class="t" style="left:471px;top:225.80px;font-size:13px;line-height:16px;">1</div>
<div class="a" style="left:518px;top:221px;width:111px;height:25px;border:1px solid #d9d9d9;background:#fff"></div>
<div class="t" style="left:524.5px;top:225.80px;font-size:13px;line-height:16px;">10/08/2023</div>
<svg style="left:0;top:0" width="1" height="1"><rect x="607.3" y="224.2" width="17.4" height="17.4" rx="2" fill="#1a9ad6"/><rect x="608.8" y="227.8" width="14.4" height="12.4" fill="#bfe9f8"/><path d="M608.8 231h14.4M608.8 234.3h14.4M608.8 237.5h14.4M612.3 227.8v12.4M615.9 227.8v12.4M619.5 227.8v12.4" stroke="#fff" stroke-width="0.9"/><rect x="612.8" y="231.4" width="2.8" height="2.6" fill="#1a9ad6"/></svg>
<div class="a" style="left:663px;top:221px;width:228px;height:25px;border:1px solid #d9d9d9;background:#fff"></div>
<div class="t" style="left:669.3px;top:225.80px;font-size:13px;line-height:16px;">Buenos Aires</div>
<svg style="left:0;top:0" width="1" height="1"><circle cx="860" cy="230.3" r="5.4" fill="none" stroke="#129dea" stroke-width="2"/><path d="M863.8 234.1l5 5.2" stroke="#129dea" stroke-width="2.6" stroke-linecap="round"/></svg>
<div class="dcaret" style="left:876px;top:232px"></div>
<div class="a" style="left:923px;top:221px;width:228px;height:25px;border:1px solid #d9d9d9;background:#fff"></div>
<div class="t" style="left:952px;top:225.80px;font-size:13px;line-height:16px;">Eco Industry S.A.</div>
<svg style="left:0;top:0" width="1" height="1"><circle cx="1120" cy="230.3" r="5.4" fill="none" stroke="#129dea" stroke-width="2"/><path d="M1123.8 234.1l5 5.2" stroke="#129dea" stroke-width="2.6" stroke-linecap="round"/></svg>
<div class="dcaret" style="left:1136px;top:232px"></div>
<div class="a" style="left:1183px;top:221px;width:228px;height:25px;border:1px solid #d9d9d9;background:#fff"></div>
<div class="t" style="left:1189.3px;top:225.80px;font-size:13px;line-height:16px;">Centro de distribución</div>
<svg style="left:0;top:0" width="1" height="1"><circle cx="1380" cy="230.3" r="5.4" fill="none" stroke="#129dea" stroke-width="2"/><path d="M1383.8 234.1l5 5.2" stroke="#129dea" stroke-width="2.6" stroke-linecap="round"/></svg>
<div class="dcaret" style="left:1396px;top:232px"></div>
<div class="a" style="left:1443px;top:221px;width:228px;height:25px;border:1px solid #d9d9d9;background:#fff"></div>
<div class="t" style="left:1449.3px;top:225.80px;font-size:13px;line-height:16px;">Cominelli Luisina</div>
<svg style="left:0;top:0" width="1" height="1"><circle cx="1640" cy="230.3" r="5.4" fill="none" stroke="#129dea" stroke-width="2"/><path d="M1643.8 234.1l5 5.2" stroke="#129dea" stroke-width="2.6" stroke-linecap="round"/></svg>
<div class="dcaret" style="left:1656px;top:232px"></div>
<svg style="left:0;top:0" width="1" height="1"><path d="M930 234.6A4.9 4.9 0 0 1 939 230" fill="none" stroke="#2a86c0" stroke-width="2.6"/><path d="M929.4 236A5.8 5.8 0 0 1 938.5 228.5" fill="none" stroke="#2a86c0" stroke-width="1.2" stroke-dasharray="1.3 1.1"/><path d="M940.4 228.8A6 6 0 1 1 929 235.2Q936 236.4 940.4 228.8Z" fill="#3faf3c"/><path d="M932 237.2q4.5-0.5 7.2-4.5" stroke="#9ee08f" stroke-width="0.8" fill="none"/></svg>
<div class="t" style="left:339px;top:259.49px;font-size:11px;line-height:14px;color:#707070;">Observación</div>
<div class="t" style="left:1052px;top:259.49px;font-size:11px;line-height:14px;color:#707070;">Cliente</div>
<div class="t" style="left:1312px;top:259.49px;font-size:11px;line-height:14px;color:#707070;">Proveedor</div>
<div class="t" style="left:1572px;top:259.49px;font-size:11px;line-height:14px;color:#707070;">Control de bien</div>
<div class="a" style="left:338px;top:275px;width:683px;height:83px;border:1px solid #d9d9d9;background:#fff"></div>
<div class="a" style="left:339px;top:276px;width:681px;height:22.5px;background:#f7f8f9;border-bottom:1px solid #d9d9d9"></div>
<svg style="left:0;top:0" width="1" height="1"><path d="M353 290.5A6.2 6.2 0 1 0 359 281.5" fill="none" stroke="#b7dcea" stroke-width="1.3"/><path d="M354 281.5l4-2.5v5z" fill="#b7dcea"/><path d="M389 290.5A6.2 6.2 0 1 1 383 281.5" fill="none" stroke="#b7dcea" stroke-width="1.3"/><path d="M388 281.5l-4-2.5v5z" fill="#b7dcea"/></svg>
<div class="t" style="left:400px;top:276px;font-size:20px;line-height:22px;font-weight:700;color:#129dea;transform:scaleX(0.9);transform-origin:0 0">B</div>
<svg style="left:0;top:0" width="1" height="1"><path d="M433.6 279.5L428.6 294.3" stroke="#129dea" stroke-width="2.4"/><rect x="449.6" y="279.6" width="14.6" height="14.8" fill="none" stroke="#2a8fc0" stroke-width="1"/><circle cx="456.8" cy="287" r="6.2" fill="#129dea"/><path d="M455 284v6l4.6-3z" fill="#fff"/><path d="M471.3 280v18.5" stroke="#c0c0c0" stroke-width="1"/><path d="M474 294l6-6M482 286l6.5-6.5" stroke="#1a9ad6" stroke-width="1.6"/><path d="M473.5 294.5v-5l5 5z" fill="#1a9ad6"/><path d="M489 279v5l-5-5z" fill="#1a9ad6"/></svg>
<div class="a" style="left:1051px;top:275px;width:228px;height:25px;border:1px solid #d9d9d9;background:#f7f7f7"></div>
<div class="a" style="left:1311px;top:275px;width:228px;height:25px;border:1px solid #d9d9d9;background:#f7f7f7"></div>
<div class="a" style="left:1571px;top:275px;width:228px;height:25px;border:1px solid #d9d9d9;background:#fff"></div>
<svg style="left:0;top:0" width="1" height="1"><circle cx="1769" cy="284.3" r="5.4" fill="none" stroke="#129dea" stroke-width="2"/><path d="M1772.8 288.1l5 5.2" stroke="#129dea" stroke-width="2.6" stroke-linecap="round"/></svg>
<div class="dcaret" style="left:1783px;top:286px"></div>
<div class="t" style="left:345px;top:380.84px;font-size:12px;line-height:15px;color:#129dea;letter-spacing:-0.05px">Bien de uso entregado</div>
<svg style="left:0;top:0" width="1" height="1"><path d="M493 394.5l3.8-3.8M499.5 388l4-4" stroke="#129dea" stroke-width="1.4"/><path d="M492 395.5v-4.5l4.5 4.5z M504.5 383v4.5l-4.5-4.5z" fill="#129dea"/></svg>
<div class="a" style="left:514px;top:376px;width:162px;height:26px;background:#d8d8d8;border-radius:4px 4px 0 0"></div>
<div class="t" style="left:523.5px;top:380.84px;font-size:12px;line-height:15px;color:#888;letter-spacing:-0.05px">Producto entregado</div>
<div class="a" style="left:337px;top:403px;width:1460px;height:30px;background:#f3f3f3"></div>
<div class="a" style="left:337px;top:432.5px;width:1463px;height:2px;background:#5a9fc7"></div>
<div class="t" style="left:348.6px;top:410.94px;font-size:12px;line-height:15px;color:#222;letter-spacing:-0.1px">Bien de uso entrega</div>
<div class="t" style="left:712px;top:410.94px;font-size:12px;line-height:15px;color:#222;letter-spacing:-0.1px">Cantidad</div>
<div class="t" style="left:830px;top:410.94px;font-size:12px;line-height:15px;color:#222;letter-spacing:-0.1px">Ubicación</div>
<div class="t" style="left:1080px;top:410.94px;font-size:12px;line-height:15px;color:#222;letter-spacing:-0.1px">Partida</div>
<div class="t" style="left:1215px;top:410.94px;font-size:12px;line-height:15px;color:#222;letter-spacing:-0.1px">Cantidad de serie</div>
<div class="t" style="left:1333px;top:410.94px;font-size:12px;line-height:15px;color:#222;letter-spacing:-0.1px">Disponible</div>
<div class="t" style="left:1451px;top:410.94px;font-size:12px;line-height:15px;color:#222;letter-spacing:-0.1px">Unidad</div>
<div class="t" style="left:1527px;top:410.94px;font-size:12px;line-height:15px;color:#222;letter-spacing:-0.1px">Serie</div>
<svg style="left:0;top:0" width="1" height="1"><circle cx="673" cy="414.7" r="5.6" fill="none" stroke="#129dea" stroke-width="2"/><path d="M677 418.7l5.5 5.8" stroke="#129dea" stroke-width="2.6" stroke-linecap="round"/></svg>
<svg style="left:0;top:0" width="1" height="1"><circle cx="1041" cy="414.7" r="5.6" fill="none" stroke="#129dea" stroke-width="2"/><path d="M1045 418.7l5.5 5.8" stroke="#129dea" stroke-width="2.6" stroke-linecap="round"/></svg>
<svg style="left:0;top:0" width="1" height="1"><circle cx="1176" cy="414.7" r="5.6" fill="none" stroke="#129dea" stroke-width="2"/><path d="M1180 418.7l5.5 5.8" stroke="#129dea" stroke-width="2.6" stroke-linecap="round"/></svg>
<svg style="left:0;top:0" width="1" height="1"><circle cx="1769" cy="414.7" r="5.6" fill="none" stroke="#129dea" stroke-width="2"/><path d="M1773 418.7l5.5 5.8" stroke="#129dea" stroke-width="2.6" stroke-linecap="round"/></svg>
<div class="a" style="left:337px;top:434.5px;width:1460px;height:28px;background:#fff;border-bottom:1px solid #eaeaea"></div>
<div class="a" style="left:337px;top:462.5px;width:1460px;height:28px;background:#f8f8f8;border-bottom:1px solid #eaeaea"></div>
<div class="a" style="left:337px;top:490.5px;width:1460px;height:28px;background:#fff;border-bottom:1px solid #eaeaea"></div>
<div class="a" style="left:337px;top:518.5px;width:1460px;height:28px;background:#f8f8f8;border-bottom:1px solid #eaeaea"></div>
<div class="a" style="left:337px;top:546.5px;width:1460px;height:28px;background:#fff;border-bottom:1px solid #eaeaea"></div>
<div class="a" style="left:337px;top:574.5px;width:1460px;height:28px;background:#f8f8f8;border-bottom:1px solid #eaeaea"></div>
<div class="a" style="left:337px;top:602.5px;width:1460px;height:28px;background:#fff;border-bottom:1px solid #eaeaea"></div>
<div class="a" style="left:700px;top:403px;width:1px;height:30px;background:#e0e0e0"></div>
<div class="a" style="left:700px;top:434px;width:1px;height:196px;background:#e8e8e8"></div>
<div class="a" style="left:818px;top:403px;width:1px;height:30px;background:#e0e0e0"></div>
<div class="a" style="left:818px;top:434px;width:1px;height:196px;background:#e8e8e8"></div>
<div class="a" style="left:1068px;top:403px;width:1px;height:30px;background:#e0e0e0"></div>
<div class="a" style="left:1068px;top:434px;width:1px;height:196px;background:#e8e8e8"></div>
<div class="a" style="left:1203px;top:403px;width:1px;height:30px;background:#e0e0e0"></div>
<div class="a" style="left:1203px;top:434px;width:1px;height:196px;background:#e8e8e8"></div>
<div class="a" style="left:1321px;top:403px;width:1px;height:30px;background:#e0e0e0"></div>
<div class="a" style="left:1321px;top:434px;width:1px;height:196px;background:#e8e8e8"></div>
<div class="a" style="left:1439px;top:403px;width:1px;height:30px;background:#e0e0e0"></div>
<div class="a" style="left:1439px;top:434px;width:1px;height:196px;background:#e8e8e8"></div>
<div class="a" style="left:1515px;top:403px;width:1px;height:30px;background:#e0e0e0"></div>
<div class="a" style="left:1515px;top:434px;width:1px;height:196px;background:#e8e8e8"></div>
<div class="a" style="left:1796px;top:434px;width:1px;height:196px;background:#e8e8e8"></div>
<svg style="left:0;top:0" width="1" height="1"><rect x="347" y="440.5" width="16.5" height="15" rx="2" fill="#34495a"/><rect x="348.5" y="442" width="13" height="6" fill="#56728a"/><rect x="362.5" y="444" width="14.5" height="8" fill="#c5cdd3"/><rect x="360" y="451" width="18" height="5.5" fill="#3c3f44"/><circle cx="352" cy="457" r="2" fill="#222"/><circle cx="370" cy="457" r="2" fill="#222"/><circle cx="375" cy="457" r="2" fill="#222"/></svg>
<div class="t" style="left:382.6px;top:442.84px;font-size:12px;line-height:15px;letter-spacing:-0.12px">23 BU08 Scania XT 123345</div>
<div class="t" style="left:700px;top:441.5px;width:113px;text-align:right;font-size:12px;line-height:16px">1,0000</div>
<div class="t" style="left:828px;top:442.84px;font-size:12px;line-height:15px;">SP1F1CC</div>
<div class="t" style="left:1203px;top:441.5px;width:113px;text-align:right;font-size:12px;line-height:16px">1,0000</div>
<div class="t" style="left:1522px;top:442.84px;font-size:12px;line-height:15px;">123345</div>
</body></html>
